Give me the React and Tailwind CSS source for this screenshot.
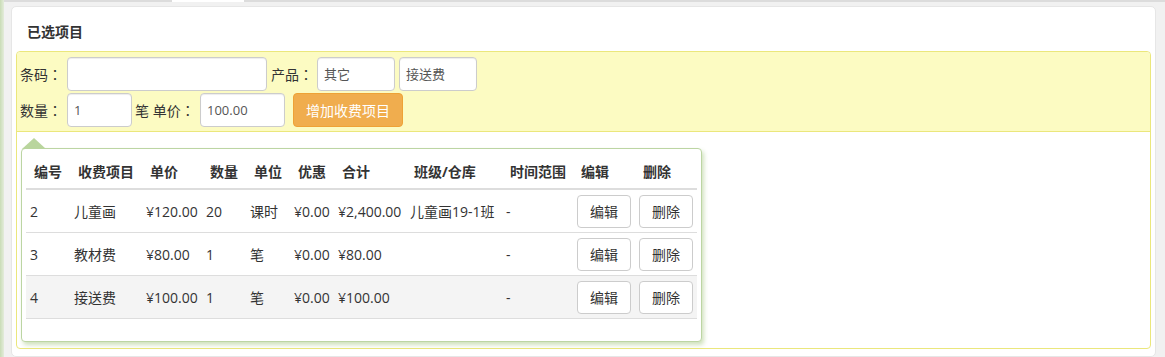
import React from "react";

const font = { fontFamily: '"Open Sans", "Noto Sans CJK SC", sans-serif' };

const rows = [
  { id: "2", name: "儿童画", price: "¥120.00", qty: "20", unit: "课时", disc: "¥0.00", total: "¥2,400.00", cls: "儿童画19-1班", range: "-" },
  { id: "3", name: "教材费", price: "¥80.00", qty: "1", unit: "笔", disc: "¥0.00", total: "¥80.00", cls: "", range: "-" },
  { id: "4", name: "接送费", price: "¥100.00", qty: "1", unit: "笔", disc: "¥0.00", total: "¥100.00", cls: "", range: "-", hl: true },
];

const cols = "grid grid-cols-[44px_72px_60px_44px_44px_44px_72px_96px_71px_62px_62px]";

function Colon() {
  return <span className="font-['Noto_Sans_CJK_TC',sans-serif]">：</span>;
}

function Btn({ children }) {
  return (
    <button className="h-[33px] w-[54px] rounded-[4px] border border-[#cccccc] bg-white text-[14px] text-[#333]">
      {children}
    </button>
  );
}

function Input({ w, value }) {
  return (
    <div
      className={`h-[34px] ${w} shrink-0 rounded-[4px] border border-[#cccccc] bg-white px-[6px] text-[13px] leading-[32px] text-[#555] shadow-[inset_0_1px_1px_rgba(0,0,0,0.075)]`}
    >
      {value}
    </div>
  );
}

export default function App() {
  return (
    <div className="flex h-[357px] w-[1165px] overflow-hidden bg-[#f1f1f1] text-[#333]" style={font}>
      <div className="w-[4px] shrink-0 bg-gradient-to-r from-[#c9dcb6] to-[#e4ecdb]" />
      <div className="flex flex-1 flex-col">
        <div className="flex h-[2px] shrink-0">
          <div className="w-[168px] bg-[#dcdcdc]" />
          <div className="w-[72px] bg-white" />
          <div className="flex-1 bg-[#dcdcdc]" />
        </div>
        <div className="ml-[7px] mr-[9px] mt-[4px] flex-1 rounded-[5px] border border-[#e6e6e6] bg-white px-[4px] pt-[12px]">
          <div className="h-[26px] pl-[11px] text-[14px] font-bold leading-[26px] text-[#333]">已选项目</div>
          <div className="mt-[6px] rounded-[4px] border border-[#ebe77c]">
            <div className="rounded-t-[4px] border-b border-[#ebe77c] bg-[#fcfbc2] px-[3px] pb-[4px] pt-[5px] text-[14px]">
              <div className="flex h-[34px] items-center">
                <span className="w-[47px] shrink-0">条码<Colon /></span>
                <Input w="w-[200px]" value="" />
                <span className="ml-[4px] w-[46px] shrink-0">产品<Colon /></span>
                <Input w="w-[78px]" value="其它" />
                <div className="w-[4px]" />
                <Input w="w-[78px]" value="接送费" />
              </div>
              <div className="mt-[2px] flex h-[34px] items-center">
                <span className="w-[47px] shrink-0">数量<Colon /></span>
                <Input w="w-[65px]" value="1" />
                <span className="ml-[3px] w-[65px] shrink-0 whitespace-nowrap">笔 单价<Colon /></span>
                <Input w="w-[85px]" value="100.00" />
                <button className="ml-[8px] h-[34px] w-[110px] rounded-[4px] border border-[#eea236] bg-[#f0ad4e] text-[14px] text-white">
                  增加收费项目
                </button>
              </div>
            </div>
            <div className="px-[4px] pb-[6px] pt-[16px]">
              <div className="relative w-[681px] rounded-[4px] border border-[#bcd5a3] bg-white px-[4px] pb-[22px] pt-[6px] shadow-[2px_3px_4px_rgba(150,190,110,0.45)]">
                <div className="absolute left-[0px] top-[-11px] h-0 w-0 border-b-[11px] border-l-[12px] border-r-[12px] border-b-[#b9d59d] border-l-transparent border-r-transparent" />
                <div className={`${cols} h-[35px] items-center border-b-2 border-[#dddddd] text-[14px] font-bold`}>
                  {["编号", "收费项目", "单价", "数量", "单位", "优惠", "合计", "班级/仓库", "时间范围", "编辑", "删除"].map((h) => (
                    <div key={h} className="whitespace-nowrap px-[8px]">{h}</div>
                  ))}
                </div>
                {rows.map((r) => (
                  <div
                    key={r.id}
                    className={`${cols} h-[43px] items-center border-b border-[#dddddd] text-[14px] ${r.hl ? "bg-[#f4f4f4]" : ""}`}
                  >
                    <div className="px-[4px]">{r.id}</div>
                    <div className="px-[4px]">{r.name}</div>
                    <div className="whitespace-nowrap px-[4px]">{r.price}</div>
                    <div className="px-[4px]">{r.qty}</div>
                    <div className="px-[4px]">{r.unit}</div>
                    <div className="px-[4px]">{r.disc}</div>
                    <div className="whitespace-nowrap px-[4px]">{r.total}</div>
                    <div className="whitespace-nowrap px-[4px]">{r.cls}</div>
                    <div className="px-[4px]">{r.range}</div>
                    <div className="px-[4px]"><Btn>编辑</Btn></div>
                    <div className="px-[4px]"><Btn>删除</Btn></div>
                  </div>
                ))}
              </div>
            </div>
          </div>
        </div>
      </div>
    </div>
  );
}
